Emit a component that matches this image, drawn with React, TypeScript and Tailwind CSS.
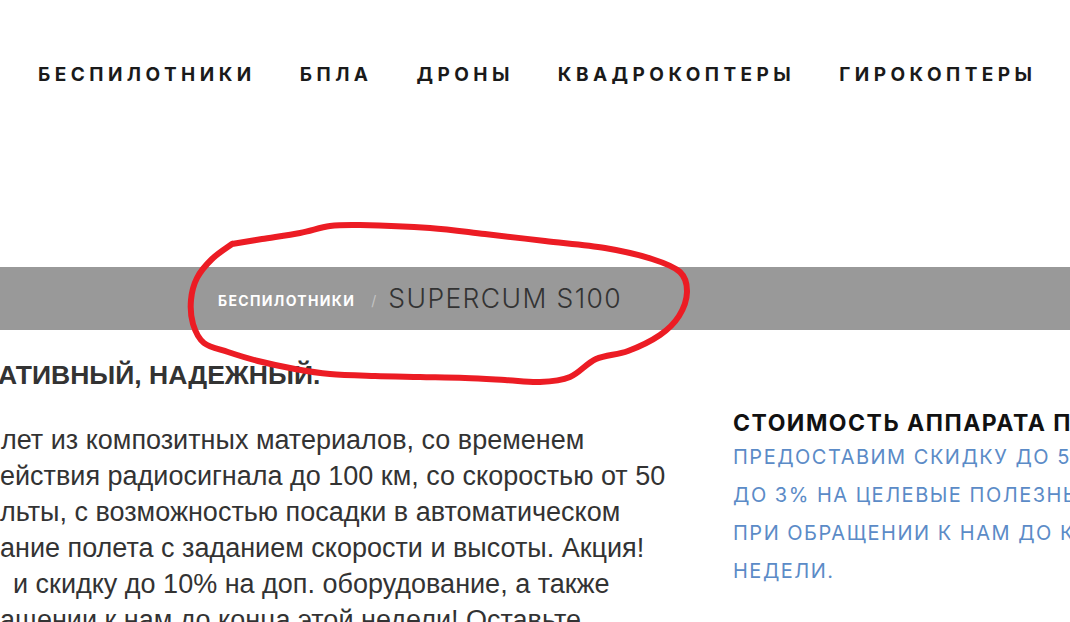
import React from 'react';

const navItems = ['БЕСПИЛОТНИКИ', 'БПЛА', 'ДРОНЫ', 'КВАДРОКОПТЕРЫ', 'ГИРОКОПТЕРЫ'];

const bodyLines = [
  { text: 'лет из композитных материалов, со временем', pad: 'pl-[1px]' },
  { text: 'ействия радиосигнала до 100 км, со скоростью от 50', pad: 'pl-0' },
  { text: 'льты, с возможностью посадки в автоматическом', pad: 'pl-0' },
  { text: 'ание полета с заданием скорости и высоты. Акция!', pad: 'pl-0' },
  { text: 'и скидку до 10% на доп. оборудование, а также', pad: 'pl-[13px]' },
  { text: 'ащении к нам до конца этой недели! Оставьте', pad: 'pl-0' },
];

const promoLines = [
  'ПРЕДОСТАВИМ СКИДКУ ДО 5% НА',
  'ДО 3% НА ЦЕЛЕВЫЕ ПОЛЕЗНЫЕ НАГРУЗКИ',
  'ПРИ ОБРАЩЕНИИ К НАМ ДО КОНЦА ЭТОЙ',
  'НЕДЕЛИ.',
];

// hand drawn marker loop around the breadcrumb
const loop: [number, number][] = [
  [232, 244], [262, 239], [300, 233], [330, 226], [360, 225], [430, 228], [485, 234],
  [545, 241], [605, 248], [652, 259], [680, 272], [687, 292], [679, 316], [660, 335],
  [628, 351], [596, 359], [570, 377], [540, 382], [505, 380], [465, 378], [420, 377],
  [375, 376], [330, 374], [295, 369], [258, 361], [228, 352], [204, 343], [193, 324],
  [191, 300], [197, 278], [212, 259], [232, 244],
];

function smoothPath(pts: [number, number][]) {
  let d = `M${pts[0][0]},${pts[0][1]}`;
  for (let i = 0; i < pts.length - 1; i++) {
    const p0 = pts[i - 1] || pts[i];
    const p1 = pts[i];
    const p2 = pts[i + 1];
    const p3 = pts[i + 2] || p2;
    const c1x = p1[0] + (p2[0] - p0[0]) / 6;
    const c1y = p1[1] + (p2[1] - p0[1]) / 6;
    const c2x = p2[0] - (p3[0] - p1[0]) / 6;
    const c2y = p2[1] - (p3[1] - p1[1]) / 6;
    d += ` C${c1x},${c1y} ${c2x},${c2y} ${p2[0]},${p2[1]}`;
  }
  return d;
}

export default function App() {
  return (
    <div className="relative w-[1070px] h-[622px] overflow-hidden bg-white">
      {/* Top navigation */}
      <header className="h-[267px]">
        <nav className="flex items-center gap-[44px] pl-[38px] pt-[62px] font-['Inter',sans-serif] font-bold text-[19px] tracking-[4.45px] text-[#1a1a1a]">
          {navItems.map((item) => (
            <span key={item} className="whitespace-nowrap leading-[26px]">
              {item}
            </span>
          ))}
        </nav>
      </header>

      {/* Breadcrumb bar */}
      <div className="h-[63px] bg-[#999999] flex items-center pl-[218px] font-['Inter',sans-serif]">
        <span className="text-white font-bold text-[14px] tracking-[1.35px] pt-[3px]">БЕСПИЛОТНИКИ</span>
        <span className="text-[#c4c4c4] text-[14px] ml-[16px] mr-[12px] pt-[3px]">/</span>
        <span className="text-[#333333] font-light text-[26.5px] tracking-[1.4px]">SUPERCUM S100</span>
      </div>

      {/* Content */}
      <div className="flex">
        <div className="w-[733px] shrink-0 font-['Liberation_Sans',Arial,sans-serif] text-[#333333]">
          <h1 className="font-bold text-[26.5px] leading-[30px] pt-[30px] -ml-[2px] whitespace-nowrap">
            АТИВНЫЙ, НАДЕЖНЫЙ.
          </h1>
          <div className="pt-[32px] text-[27px] leading-[36px]">
            {bodyLines.map((l) => (
              <div key={l.text} className={`whitespace-nowrap ${l.pad}`}>
                {l.text}
              </div>
            ))}
          </div>
        </div>

        <div className="flex-1 min-w-0 overflow-hidden pt-[78px] font-['Inter',sans-serif]">
          <h2 className="font-bold text-[23px] tracking-[1.5px] leading-[30px] text-[#111111] whitespace-nowrap">
            СТОИМОСТЬ АППАРАТА ПО ЗАПРОСУ
          </h2>
          <div className="text-[20px] tracking-[1.5px] leading-[38px] text-[#5b8bc7] font-normal">
            {promoLines.map((l) => (
              <div key={l} className="whitespace-nowrap">
                {l}
              </div>
            ))}
          </div>
        </div>
      </div>

      {/* Marker annotation */}
      <svg className="absolute inset-0 pointer-events-none" width="1070" height="622" viewBox="0 0 1070 622">
        <path d={smoothPath(loop)} fill="none" stroke="#ec1c24" strokeWidth="6" strokeLinecap="round" strokeLinejoin="round" />
      </svg>
    </div>
  );
}
